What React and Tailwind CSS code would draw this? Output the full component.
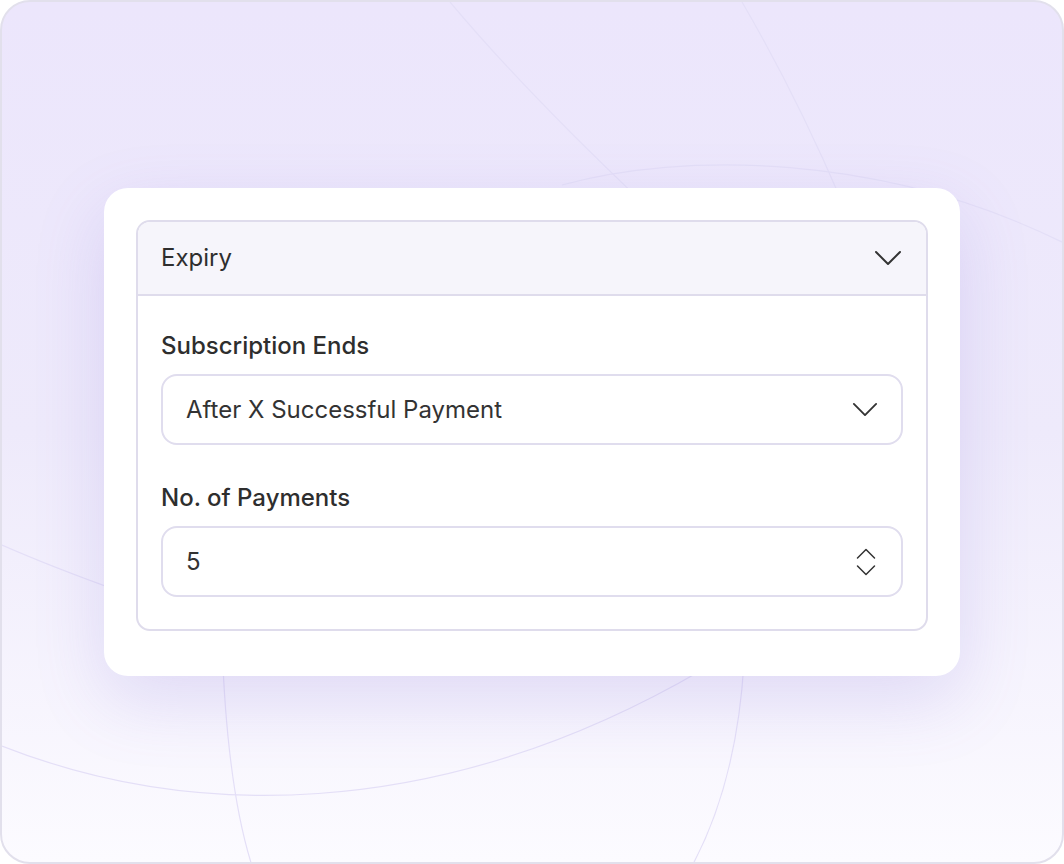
import { useState } from 'react'

const font = { fontFamily: 'Inter, "Noto Sans", sans-serif' }

// Decorative arcs behind the card.
function Backdrop() {
  return (
    <svg className="pointer-events-none absolute inset-0 h-full w-full" viewBox="0 0 1060 860" fill="none">
      <g stroke="#e4dff7" strokeWidth="1.2">
        <path d="M448 0 C490 50 545 110 640 200" />
        <path d="M740 0 C775 60 810 130 840 200" />
        <path d="M560 183 C680 150 880 150 1064 242" />
        <path d="M0 543 Q50 565 120 590" />
        <path d="M0 744 C180 815 430 825 700 668" />
        <path d="M220 640 Q225 790 252 870" />
        <path d="M742 660 Q735 780 690 864" />
      </g>
    </svg>
  )
}

function Chevron({ className }) {
  return (
    <svg className={className} viewBox="0 0 28 16" fill="none" stroke="#333333" strokeWidth="2" strokeLinecap="round" strokeLinejoin="round">
      <path d="M2 2 L14 14 L26 2" />
    </svg>
  )
}

function Stepper() {
  return (
    <svg className="h-[28px] w-[20px]" viewBox="0 0 20 28" fill="none" stroke="#333333" strokeWidth="1.5" strokeLinecap="round" strokeLinejoin="round">
      <path d="M1.5 10 L10 1.5 L18.5 10" />
      <path d="M1.5 18 L10 26.5 L18.5 18" />
    </svg>
  )
}

export default function App() {
  const [open] = useState(true)
  const [payments] = useState(5)

  return (
    <div className="h-[864px] w-[1064px] bg-white" style={font}>
      <div className="relative h-full w-full overflow-hidden rounded-[30px] border-2 border-[#e2e0ec] bg-gradient-to-b from-[#ece6fc] via-[#eeeafb] to-[#fcfbff]">
        <Backdrop />
        <div className="relative ml-[102px] mt-[186px] w-[856px] rounded-[24px] bg-white px-8 pb-[45px] pt-8 shadow-[0_24px_70px_rgba(120,100,210,0.18)]">
          <div className="overflow-hidden rounded-[14px] border-2 border-[#dfdcec]">
            <div className="flex h-[74px] items-center justify-between border-b-2 border-[#dfdcec] bg-[#f6f5fb] pl-[23px] pr-[24px]">
              <span className="text-[24px] text-[#2e2e2e]">Expiry</span>
              <Chevron className="h-[16px] w-[28px]" />
            </div>
            {open && (
              <div className="flex flex-col px-[23px] pb-[32px] pt-[36px]">
                <label className="text-[24px] font-medium leading-[28px] text-[#2e2e2e]">Subscription Ends</label>
                <div className="mt-[14px] flex h-[71px] items-center justify-between rounded-[16px] border-2 border-[#e0ddee] pl-[23px] pr-[23px]">
                  <span className="text-[24px] text-[#333333]">After X Successful Payment</span>
                  <Chevron className="h-[15px] w-[26px]" />
                </div>
                <label className="mt-[39px] text-[24px] font-medium leading-[28px] text-[#2e2e2e]">No. of Payments</label>
                <div className="mt-[14px] flex h-[71px] items-center justify-between rounded-[16px] border-2 border-[#e0ddee] pl-[23px] pr-[25px]">
                  <span className="text-[24px] text-[#333333]">{payments}</span>
                  <Stepper />
                </div>
              </div>
            )}
          </div>
        </div>
      </div>
    </div>
  )
}
